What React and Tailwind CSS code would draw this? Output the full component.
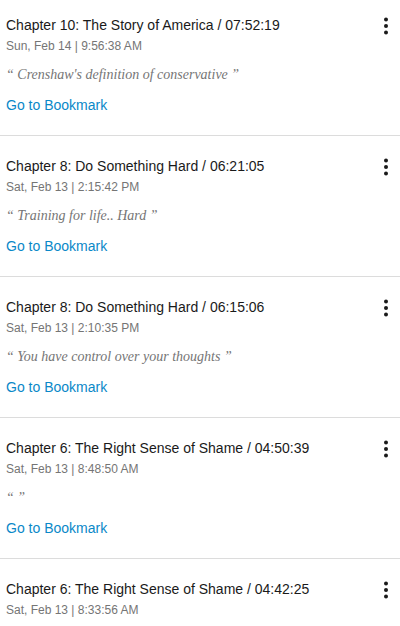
import React from "react";

const items = [
  { title: "Chapter 10: The Story of America / 07:52:19", date: "Sun, Feb 14 | 9:56:38 AM", quote: "Crenshaw's definition of conservative" },
  { title: "Chapter 8: Do Something Hard / 06:21:05", date: "Sat, Feb 13 | 2:15:42 PM", quote: "Training for life.. Hard" },
  { title: "Chapter 8: Do Something Hard / 06:15:06", date: "Sat, Feb 13 | 2:10:35 PM", quote: "You have control over your thoughts" },
  { title: "Chapter 6: The Right Sense of Shame / 04:50:39", date: "Sat, Feb 13 | 8:48:50 AM", quote: "" },
  { title: "Chapter 6: The Right Sense of Shame / 04:42:25", date: "Sat, Feb 13 | 8:33:56 AM", quote: "" },
];

function Dots() {
  return (
    <svg width="6" height="20" viewBox="0 0 6 20" className="block">
      <circle cx="3" cy="3.5" r="2" fill="#1a1a1a" />
      <circle cx="3" cy="10" r="2" fill="#1a1a1a" />
      <circle cx="3" cy="16.5" r="2" fill="#1a1a1a" />
    </svg>
  );
}

export default function App() {
  return (
    <div className="h-[626px] w-[400px] overflow-hidden bg-white font-['Liberation_Sans',Arial,sans-serif]">
      <div className="-mt-[5px]">
        {items.map((it, i) => (
          <div key={i} className="relative h-[141px] border-b border-[#dcdcdc] pl-[6px] pt-[20px]">
            <div className="text-[14px] leading-[20px] text-[#1a1a1a]">{it.title}</div>
            <div className="mt-[3px] text-[12px] leading-[16px] text-[#757575]">{it.date}</div>
            <div className="mt-[11px] font-['Liberation_Serif',serif] italic text-[14px] leading-[20px] text-[#757575]">
              {"\u201C "}{it.quote}{it.quote ? " " : ""}{"\u201D"}
            </div>
            <div className="mt-[10px] text-[14px] leading-[20px] text-[#0a88c8]">Go to Bookmark</div>
            <div className="absolute right-[11px] top-[21px]">
              <Dots />
            </div>
          </div>
        ))}
      </div>
    </div>
  );
}
